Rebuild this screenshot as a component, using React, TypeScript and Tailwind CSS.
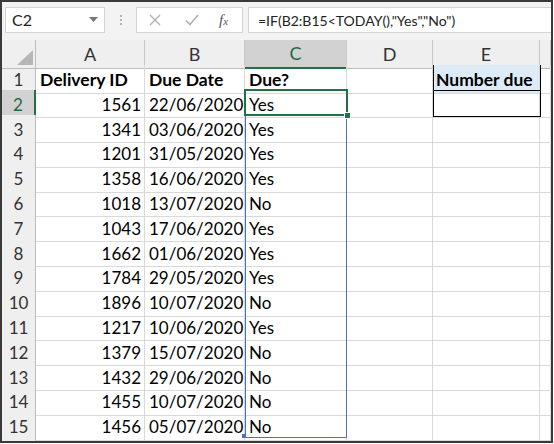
import React from 'react'

const rows: [number, string, string][] = [
  [1561, '22/06/2020', 'Yes'],
  [1341, '03/06/2020', 'Yes'],
  [1201, '31/05/2020', 'Yes'],
  [1358, '16/06/2020', 'Yes'],
  [1018, '13/07/2020', 'No'],
  [1043, '17/06/2020', 'Yes'],
  [1662, '01/06/2020', 'Yes'],
  [1784, '29/05/2020', 'Yes'],
  [1896, '10/07/2020', 'No'],
  [1217, '10/06/2020', 'Yes'],
  [1379, '15/07/2020', 'No'],
  [1432, '29/06/2020', 'No'],
  [1455, '10/07/2020', 'No'],
  [1456, '05/07/2020', 'No'],
]

const cols = 'grid grid-cols-[34px_109px_100px_102px_86px_107px_11px]'
const cell = 'border-r border-b border-[#d9d9d9] flex items-center pt-[2px] overflow-hidden whitespace-nowrap'
const rowH = 'h-[24.8px]'

function ColHead({ label, active }: { label: string; active?: boolean }) {
  return (
    <div
      className={`flex items-center justify-center border-r border-[#c8c8c8] ${
        active ? 'bg-[#d2d2d2] text-[#1e6b41] border-b-2 border-b-[#217346]' : 'bg-[#efefef] text-[#333] border-b border-b-[#bdbdbd]'
      }`}
    >
      {label}
    </div>
  )
}

function RowHead({ n, active }: { n: number; active?: boolean }) {
  return (
    <div
      className={`flex items-center justify-center pt-[2px] border-b border-[#d0d0d0] ${
        active ? 'bg-[#d2d2d2] text-[#1e6b41] border-r-2 border-r-[#217346]' : 'bg-[#efefef] text-[#333] border-r border-r-[#bdbdbd]'
      }`}
    >
      {n}
    </div>
  )
}

export default function App() {
  return (
    <div className="w-[553px] h-[443px] border-2 border-[#3a3a3a] bg-white overflow-hidden relative font-['Lato',sans-serif] text-[17px] text-black">
      {/* formula bar */}
      <div className="h-[38px] bg-[#f3f3f3] flex items-start pt-[5px] pl-[3px] gap-0">
        <div className="w-[100px] h-[26px] bg-white border border-[#d4d4d4] flex items-center pl-[6px] pr-[6px] justify-between text-[16px] text-[#222]">
          <span>C2</span>
          <svg width="9" height="6" viewBox="0 0 9 6"><path d="M0 0h9L4.5 5z" fill="#777" /></svg>
        </div>
        <div className="w-[31px] h-[26px] flex flex-col items-center justify-center gap-[2px]">
          <span className="w-[2px] h-[2px] bg-[#b5b5b5]" />
          <span className="w-[2px] h-[2px] bg-[#b5b5b5]" />
          <span className="w-[2px] h-[2px] bg-[#b5b5b5]" />
        </div>
        <div className="w-[107px] h-[26px] bg-white border border-[#d4d4d4] flex items-center">
          <svg className="ml-[12px]" width="12" height="12" viewBox="0 0 12 12"><path d="M1 1l10 10M11 1L1 11" stroke="#b0b0b0" strokeWidth="1.4" /></svg>
          <svg className="ml-[24px]" width="14" height="12" viewBox="0 0 14 12"><path d="M1 6.5l4 4L13 1" fill="none" stroke="#b0b0b0" strokeWidth="1.6" /></svg>
          <span className="ml-[20px] italic font-['Liberation_Serif',serif] text-[15px] text-[#555]">f<span className="text-[11px]">x</span></span>
        </div>
        <div className="ml-[5px] flex-1 h-[26px] bg-white border border-[#d4d4d4] border-r-0 flex items-center pl-[9px] text-[14px] text-[#222]">
          =IF(B2:B15&lt;TODAY(),"Yes","No")
        </div>
      </div>

      {/* grid */}
      <div className={`${cols} h-[25px] text-[18px]`}>
        <div className="bg-[#efefef] border-r border-b border-[#bdbdbd] relative">
          <svg className="absolute right-[2px] bottom-[3px]" width="16" height="15" viewBox="0 0 16 15"><path d="M16 0V15H0z" fill="#b7b7b7" /></svg>
        </div>
        <ColHead label="A" />
        <ColHead label="B" />
        <ColHead label="C" active />
        <ColHead label="D" />
        <ColHead label="E" />
        <ColHead label="" />
      </div>

      <div className={`${cols} ${rowH}`}>
        <RowHead n={1} />
        <div className={`${cell} font-bold text-[17.5px] pl-[4px]`}>Delivery ID</div>
        <div className={`${cell} font-bold text-[17.5px] pl-[4px]`}>Due Date</div>
        <div className={`${cell} font-bold text-[17.5px] pl-[4px]`}>Due?</div>
        <div className={cell} />
        <div className={`${cell} font-bold text-[17.5px] pl-[3px] bg-[#ddebf7]`}>Number due</div>
        <div className={cell} />
      </div>

      {rows.map(([id, date, due], i) => (
        <div key={id + date} className={`${cols} ${rowH}`}>
          <RowHead n={i + 2} active={i === 0} />
          <div className={`${cell} justify-end pr-[3px]`}>{id}</div>
          <div className={`${cell} pl-[4px]`}>{date}</div>
          <div className={`${cell} pl-[4px]`}>{due}</div>
          <div className={cell} />
          <div className={cell} />
          <div className={cell} />
        </div>
      ))}
      <div className={`${cols} h-[10px]`}>
        <div className="bg-[#efefef] border-r border-[#bdbdbd]" />
        <div className="border-r border-[#d9d9d9]" />
        <div className="border-r border-[#d9d9d9]" />
        <div className="border-r border-[#d9d9d9]" />
        <div className="border-r border-[#d9d9d9]" />
        <div className="border-r border-[#d9d9d9]" />
        <div />
      </div>

      {/* spill range C2:C15 */}
      <div className="absolute left-[243px] top-[87.8px] w-[102px] h-[348px] border border-[#4472c4] pointer-events-none" />
      <div className="absolute left-[240px] top-[432px] w-[4px] h-[4px] bg-[#4472c4]" />
      {/* E1:E2 border */}
      <div className="absolute left-[430.5px] top-[63px] w-[108px] h-[51.6px] border-x border-b border-black pointer-events-none" />
      <div className="absolute left-[430.5px] top-[87.8px] w-[108px] h-px bg-black" />
      {/* active cell C2 */}
      <div className="absolute left-[242px] top-[86.8px] w-[104px] h-[27px] border-2 border-[#217346] pointer-events-none" />
      <div className="absolute left-[341.5px] top-[110px] w-[7px] h-[7px] bg-[#217346] border border-white" />
    </div>
  )
}
